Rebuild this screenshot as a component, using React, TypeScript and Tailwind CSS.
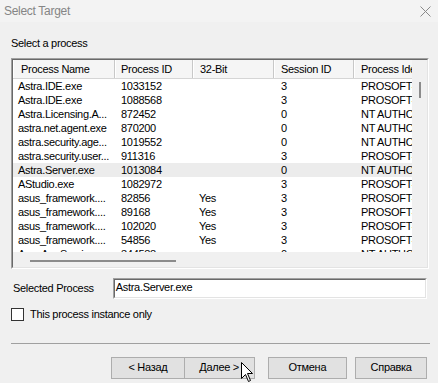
import React from 'react';

const cols = [
  { title: 'Process Name', w: 102, hp: 7, dp: 5 },
  { title: 'Process ID', w: 78, hp: 5, dp: 5 },
  { title: '32-Bit', w: 81, hp: 6, dp: 5 },
  { title: 'Session ID', w: 80, hp: 6, dp: 6 },
  { title: 'Process Identity', w: 90, hp: 6, dp: 6 },
];

const rows: string[][] = [
  ['Astra.IDE.exe', '1033152', '', '3', 'PROSOFT-PC\\user'],
  ['Astra.IDE.exe', '1088568', '', '3', 'PROSOFT-PC\\user'],
  ['Astra.Licensing.A...', '872452', '', '0', 'NT AUTHORITY\\SYSTEM'],
  ['astra.net.agent.exe', '870200', '', '0', 'NT AUTHORITY\\SYSTEM'],
  ['astra.security.age...', '1019552', '', '0', 'NT AUTHORITY\\SYSTEM'],
  ['astra.security.user...', '911316', '', '3', 'PROSOFT-PC\\user'],
  ['Astra.Server.exe', '1013084', '', '0', 'NT AUTHORITY\\SYSTEM'],
  ['AStudio.exe', '1082972', '', '3', 'PROSOFT-PC\\user'],
  ['asus_framework....', '82856', 'Yes', '3', 'PROSOFT-PC\\user'],
  ['asus_framework....', '89168', 'Yes', '3', 'PROSOFT-PC\\user'],
  ['asus_framework....', '102020', 'Yes', '3', 'PROSOFT-PC\\user'],
  ['asus_framework....', '54856', 'Yes', '3', 'PROSOFT-PC\\user'],
  ['AsusAppService...', '344588', '', '0', 'NT AUTHORITY\\SYSTEM'],
];

const SELECTED = 6;

const Button: React.FC<{ label: string; w: number; className?: string }> = ({ label, w, className }) => (
  <div
    style={{ width: w }}
    className={`h-[22px] flex items-center justify-center bg-[#e1e1e1] border border-[#adadad] text-black ${className ?? ''}`}
  >
    {label}
  </div>
);

const App: React.FC = () => {
  return (
    <div className="relative w-[438px] h-[383px] bg-[#f0f0f0] overflow-hidden font-['Liberation_Sans',Arial,sans-serif] text-[11px] tracking-[-0.3px] text-black flex flex-col">
      {/* title bar */}
      <div className="h-[22px] bg-[#f3f3f3] flex items-center justify-between pl-[4px] pr-[6px]">
        <span className="text-[12px] text-[#858585]">Select Target</span>
        <svg width="11" height="11" viewBox="0 0 11 11" className="mr-[1px]">
          <path d="M0.5 0.5 L10.5 10.5 M10.5 0.5 L0.5 10.5" stroke="#8a8a8a" strokeWidth="1" />
        </svg>
      </div>

      <div className="flex-1 flex flex-col px-[11px] pt-[14px]">
        <div className="h-[14px] leading-[14px]">Select a process</div>

        {/* list view */}
        <div className="mt-[8px] w-[418px] h-[211px] border border-[#a0a0a0] border-r-white border-b-white">
          <div className="w-full h-full border border-[#696969] border-r-[#e3e3e3] border-b-[#e3e3e3] flex flex-col">
            <div className="flex flex-1 min-h-0">
              <div className="w-[399px] bg-white overflow-hidden">
                {/* header */}
                <div className="flex h-[19px] bg-[#f5f5f5] border-b border-[#d5d5d5]">
                  {cols.map((c, i) => (
                    <div
                      key={i}
                      style={{ width: c.w, paddingLeft: c.hp }}
                      className="shrink-0 h-full flex items-center whitespace-nowrap overflow-hidden border-r border-[#c8c8c8] border-l border-l-white"
                    >
                      {c.title}
                    </div>
                  ))}
                </div>
                {/* rows */}
                {rows.map((r, ri) => (
                  <div
                    key={ri}
                    className={`flex h-[14px] items-center ${ri === SELECTED ? 'bg-[#ececec]' : ''}`}
                  >
                    {r.map((cell, ci) => (
                      <div
                        key={ci}
                        style={{ width: cols[ci].w, paddingLeft: cols[ci].dp + (ci === 0 ? 0 : 1) }}
                        className="shrink-0 whitespace-nowrap overflow-hidden leading-[14px]"
                      >
                        {cell}
                      </div>
                    ))}
                  </div>
                ))}
              </div>
              {/* vertical scrollbar */}
              <div className="w-[15px] bg-[#f0f0f0] pt-[22px] pl-[7px]">
                <div className="w-[2px] h-[16px] bg-[#8b8b8b]" />
              </div>
            </div>
            {/* horizontal scrollbar */}
            <div className="h-[15px] bg-[#f0f0f0] pt-[8px] pl-[17px]">
              <div className="w-[146px] h-[2px] bg-[#8b8b8b]" />
            </div>
          </div>
        </div>

        {/* selected process */}
        <div className="mt-[9px] flex items-center">
          <span className="w-[102px] pl-[2px]">Selected Process</span>
          <div className="w-[315px] h-[21px] border border-[#a0a0a0] border-r-white border-b-white">
            <div className="w-full h-full bg-white border border-[#696969] border-r-[#e3e3e3] border-b-[#e3e3e3] pl-[1px] leading-[15px]">
              Astra.Server.exe
            </div>
          </div>
        </div>

        {/* checkbox */}
        <div className="mt-[7px] flex items-center gap-[6px]">
          <div className="w-[13px] h-[13px] bg-white border border-[#333333]" />
          <span>This process instance only</span>
        </div>

        {/* separator */}
        <div className="mt-[20px] w-[419px] h-px bg-[#a0a0a0]" />

        {/* buttons */}
        <div className="mt-[13px] flex pl-[100px]">
          <Button label="< Назад" w={75} />
          <Button label="Далее >" w={71} className="border-l-0 border-[#7a7a7a] border-l-transparent" />
          <Button label="Отмена" w={81} className="ml-[13px]" />
          <Button label="Справка" w={73} className="ml-[8px]" />
        </div>
      </div>

      {/* mouse cursor */}
      <svg width="13" height="21" viewBox="0 0 13 21" className="absolute left-[241px] top-[362px]">
        <path
          d="M0.5 0.5 L0.5 16.5 L4.5 12.5 L7.5 19.5 L9.5 18.5 L6.5 11.5 L11.5 11.5 Z"
          fill="white"
          stroke="black"
          strokeWidth="1"
          strokeLinejoin="miter"
        />
      </svg>
    </div>
  );
};

export default App;
